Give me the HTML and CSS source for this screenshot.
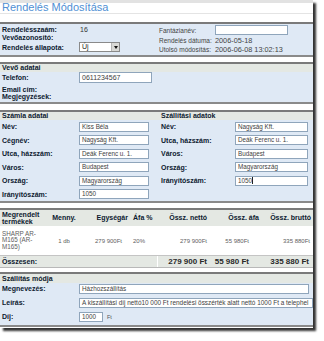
FILE: index.html
```html
<!DOCTYPE html>
<html lang="hu">
<head>
<meta charset="utf-8">
<title>Rendelés Módosítása</title>
<link rel="stylesheet" href="styles.css">
</head>
<body>
<div class="window">
  <h1 class="title">Rendelés Módosítása</h1>

  <section class="box box-a">
    <div class="split split-a">
      <div class="col left-a">
        <div class="row h8"><span class="lbl">Rendelésszaám:</span><span class="val">16</span></div>
        <div class="row h8"><span class="lbl">Vevőazonosító:</span><span></span></div>
        <div class="row h10 mt1"><span class="lbl">Rendelés állapota:</span><span class="select"><span class="sel-text">Új</span><span class="sel-btn"></span></span></div>
      </div>
      <div class="col right-a">
        <div class="row h10"><span class="rl">Fantázianév:</span><span class="field w73"></span></div>
        <div class="row h10"><span class="rl">Rendelés dátuma:</span><span class="rv">2006-05-18</span></div>
        <div class="row h9"><span class="rl">Utolsó módosítás:</span><span class="rv">2006-06-08 13:02:13</span></div>
      </div>
    </div>
  </section>

  <section class="box box-b">
    <div class="band">Vevő adatai</div>
    <div class="body body-b">
      <div class="row h11"><span class="lbl">Telefon:</span><span class="field w73 big">0611234567</span></div>
      <div class="row h7 mt3"><span class="lbl">Email cím:</span><span></span></div>
      <div class="row h7"><span class="lbl">Megjegyzések:</span><span></span></div>
    </div>
  </section>

  <section class="box box-c">
    <div class="split band-split">
      <div class="band">Számla adatai</div>
      <div class="band band-r">Szállítási adatok</div>
    </div>
    <div class="split body-c">
      <div class="col left-c">
        <div class="row rc"><span class="lbl">Név:</span><span class="field w70">Kiss Béla</span></div>
        <div class="row rc"><span class="lbl">Cégnév:</span><span class="field w70">Nagyság Kft.</span></div>
        <div class="row rc"><span class="lbl">Utca, házszám:</span><span class="field w70">Deák Ferenc u. 1.</span></div>
        <div class="row rc"><span class="lbl">Város:</span><span class="field w70">Budapest</span></div>
        <div class="row rc"><span class="lbl">Ország:</span><span class="field w70">Magyarország</span></div>
        <div class="row rc"><span class="lbl">Irányítószám:</span><span class="field w70">1050</span></div>
      </div>
      <div class="col right-c">
        <div class="row rc"><span class="lbl">Név:</span><span class="field w73">Nagyság Kft.</span></div>
        <div class="row rc"><span class="lbl">Utca, házszám:</span><span class="field w73">Deák Ferenc u. 1.</span></div>
        <div class="row rc"><span class="lbl">Város:</span><span class="field w73">Budapest</span></div>
        <div class="row rc"><span class="lbl">Ország:</span><span class="field w73">Magyarország</span></div>
        <div class="row rc"><span class="lbl">Irányítószám:</span><span class="field w73">1050<span class="caret"></span></span></div>
      </div>
    </div>
  </section>

  <section class="products">
    <div class="prow phead">
      <span class="c1">Megrendelt<br>termékek</span>
      <span class="c2">Menny.</span>
      <span class="c3">Egységár</span>
      <span class="c4">Áfa %</span>
      <span class="c5">Össz. nettó</span>
      <span class="c6">Össz. áfa</span>
      <span class="c7">Össz. bruttó</span>
    </div>
    <div class="prow pitem">
      <span class="c1">SHARP AR-<br>M165 (AR-<br>M165)</span>
      <span class="c2">1 db</span>
      <span class="c3 vpad">279 900Ft</span>
      <span class="c4">20%</span>
      <span class="c5">279 900Ft</span>
      <span class="c6 vpad">55 980Ft</span>
      <span class="c7">335 880Ft</span>
    </div>
    <div class="prow ptotal">
      <span class="tlabel">Összesen:</span>
      <span class="c5">279 900 Ft</span>
      <span class="c6 vpad">55 980 Ft</span>
      <span class="c7">335 880 Ft</span>
    </div>
  </section>

  <section class="box box-e">
    <div class="band band-e">Szállítás módja</div>
    <div class="body body-e">
      <div class="row re"><span class="lbl">Megnevezés:</span><span class="field w230">Házhozszállítás</span></div>
      <div class="row re"><span class="lbl">Leírás:</span><span class="field w234 desc">A kiszállítási díj nettó10 000 Ft rendelési összérték alatt nettó 1000 Ft a telephel</span></div>
      <div class="row re"><span class="lbl">Díj:</span><span class="fee"><span class="field w24">1000</span><span class="unit">Ft</span></span></div>
    </div>
  </section>
</div>
</body>
</html>
```

FILE: styles.css
```css
* { box-sizing: border-box; margin: 0; padding: 0; }

html, body {
  width: 324px;
  height: 341px;
  overflow: hidden;
  background: #ffffff;
}

body {
  font-family: "Liberation Sans", Arial, sans-serif;
  color: #0d1a30;
}

.window {
  width: 313px;
  height: 328px;
  background: #ffffff;
  box-shadow: inset 0 3px 0 #e2e2e2, 3px 3px 2px rgba(0, 0, 0, 0.8);
  overflow: hidden;
}

.title {
  height: 14px;
  padding: 1px 0 0 2px;
  font-size: 11px;
  line-height: 12px;
  font-weight: normal;
  color: #4f8fd4;
  border-bottom: 1px solid #e4e4e4;
  margin-bottom: 8px;
}

.box {
  background: #dfe9f5;
  border-top: 2px solid #7a7a7a;
  border-bottom: 2px solid #8a8a8a;
}

.box-b { margin-top: 5px; }
.box-c { margin-top: 6px; }
.box-e { margin-top: 4px; }

.band {
  height: 8px;
  background: #e4e8e3;
  font-size: 7px;
  line-height: 8px;
  font-weight: bold;
  padding-left: 2px;
}

.band-e {
  height: 9px;
  line-height: 9px;
}

.split {
  display: grid;
  grid-template-columns: 158px 155px;
}

.split-a { height: 31px; }

.row {
  display: grid;
  align-items: center;
}

.h7 { height: 7px; }
.h8 { height: 8px; }
.h9 { height: 9px; }
.h10 { height: 10px; }
.h11 { height: 11px; }
.mt1 { margin-top: 1px; }
.mt3 { margin-top: 3px; }

.lbl {
  font-size: 7px;
  line-height: 7px;
  font-weight: bold;
  white-space: nowrap;
}

.val {
  font-size: 7px;
  line-height: 7px;
  color: #333;
  padding-left: 1px;
}

.rl {
  font-size: 6.5px;
  line-height: 7px;
  color: #444;
  white-space: nowrap;
}

.rv {
  font-size: 7.3px;
  line-height: 7px;
  color: #444;
  white-space: nowrap;
}

.left-a { padding: 1px 0 0 2px; }
.left-a .row { grid-template-columns: 77px auto; }

.right-a { padding: 1px 0 0 1px; }
.right-a .row { grid-template-columns: 56px auto; }

.field {
  display: block;
  height: 10px;
  background: #ffffff;
  border: 1px solid #8fa5bb;
  font-size: 6.3px;
  line-height: 8px;
  padding: 0 1px 0 2px;
  color: #3e3e3e;
  white-space: nowrap;
  overflow: hidden;
}

.field.big {
  height: 11px;
  line-height: 9px;
  font-size: 7px;
}

.field.desc {
  font-size: 6.42px;
  padding-right: 0;
}

.w24 { width: 24px; }
.w70 { width: 70px; }
.w73 { width: 73px; }
.w230 { width: 230px; }
.w234 { width: 234px; }

.caret {
  display: inline-block;
  width: 1px;
  height: 7px;
  background: #222;
  vertical-align: -1px;
}

.select {
  display: flex;
  width: 41px;
  height: 10px;
  background: #fff;
  border: 1px solid #8a8a8a;
}

.sel-text {
  flex: 1;
  font-size: 7px;
  line-height: 8px;
  padding-left: 2px;
  color: #222;
}

.sel-btn {
  width: 8px;
  height: 8px;
  background: #d9d9d6;
  border-left: 1px solid #b5b5b5;
  position: relative;
}

.sel-btn::after {
  content: "";
  position: absolute;
  left: 1.5px;
  top: 3px;
  border-left: 2.5px solid transparent;
  border-right: 2.5px solid transparent;
  border-top: 3px solid #111;
}

.body-b {
  height: 30px;
  padding-left: 2px;
}
.body-b .row { grid-template-columns: 77px auto; }

.band-split .band-r { padding-left: 3px; }

.body-c { height: 81px; }
.rc { height: 13.5px; }
.left-c { padding-left: 2px; }
.left-c .row { grid-template-columns: 77px auto; }
.right-c { padding-left: 3px; }
.right-c .row { grid-template-columns: 74px auto; }

/* products */
.products {
  margin-top: 5px;
  border-top: 2px solid #7a7a7a;
  border-bottom: 1px solid #b8b8b8;
}

.prow {
  display: grid;
  grid-template-columns: 48px 32px 50px 28px 50px 52px 53px;
  align-items: center;
}

.phead {
  height: 16px;
  background: #e4e8e3;
  font-size: 7px;
  line-height: 7.5px;
  font-weight: bold;
}

.pitem {
  height: 30px;
  background: #ffffff;
  font-size: 6px;
  line-height: 6px;
  color: #5e5e5e;
  border-bottom: 1px solid #c4c4c4;
}

.pitem .c1 { font-size: 6.3px; line-height: 6.5px; }

.ptotal {
  height: 11px;
  background: #e4e8e3;
  font-size: 8px;
  line-height: 8px;
  font-weight: bold;
  color: #2a2a2a;
}

.tlabel {
  grid-column: 1 / 5;
  font-size: 7px;
  color: #0d1a30;
  padding-left: 2px;
  height: 11px;
  line-height: 11px;
  border-right: 1px solid #ffffff;
}

.c1 { padding-left: 2px; }
.c2 { text-align: center; }
.c3 { text-align: right; padding-right: 2px; }
.c4 { padding-left: 3px; }
.c5 { text-align: right; padding-right: 1px; }
.c6 { text-align: right; padding-right: 1px; }
.c7 { text-align: right; padding-right: 2px; }
.c3.vpad { padding-right: 8px; }
.c6.vpad { padding-right: 11px; }
.pitem .c7 { padding-right: 3px; }
.ptotal .c7 { padding-right: 4px; }

/* shipping */
.body-e {
  height: 42px;
  padding: 1px 0 0 2px;
}
.re {
  height: 14px;
  grid-template-columns: 77px auto;
  align-items: start;
}
.re .lbl { line-height: 10px; }

.fee {
  display: flex;
  align-items: center;
}

.unit {
  font-size: 5.5px;
  color: #555;
  padding-left: 4px;
}
```
